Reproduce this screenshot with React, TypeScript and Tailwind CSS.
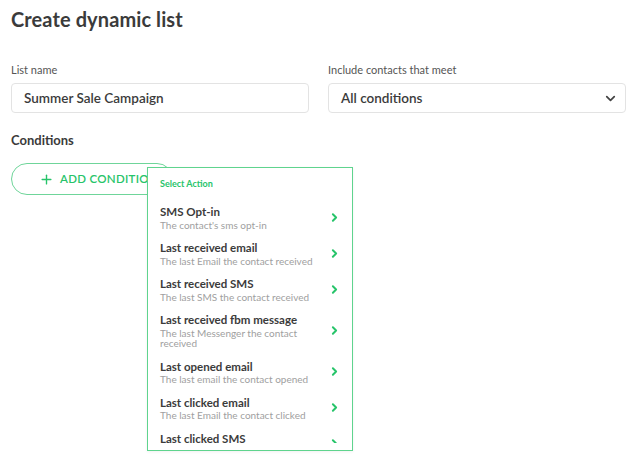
import { ChevronDown, ChevronRight, Plus } from 'lucide-react'

const actions = [
  { title: 'SMS Opt-in', desc: "The contact's sms opt-in" },
  { title: 'Last received email', desc: 'The last Email the contact received' },
  { title: 'Last received SMS', desc: 'The last SMS the contact received' },
  { title: 'Last received fbm message', desc: 'The last Messenger the contact received' },
  { title: 'Last opened email', desc: 'The last email the contact opened' },
  { title: 'Last clicked email', desc: 'The last Email the contact clicked' },
  { title: 'Last clicked SMS', desc: 'The last SMS the contact clicked' },
]

export default function App() {
  return (
    <main className="min-h-[467px] w-[638px] bg-white px-[11px] pt-[5px] font-['Lato','Liberation_Sans',sans-serif] text-[#3b3b3b]">
      <h1 className="text-[20px] font-bold leading-[28px] tracking-[0.1px]">
        Create dynamic list
      </h1>

      <div className="mt-[30px] flex gap-[19px]">
        <div className="w-[298px]">
          <label className="block text-[11px] leading-[14px] text-[#555]">List name</label>
          <div className="mt-[6px] flex h-[30px] items-center rounded-[4px] border border-[#e3e3e3] px-[12px] text-[13.5px] font-semibold">
            Summer Sale Campaign
          </div>
        </div>
        <div className="w-[298px]">
          <label className="block text-[11px] leading-[14px] text-[#555]">
            Include contacts that meet
          </label>
          <div className="mt-[6px] flex h-[30px] items-center justify-between rounded-[4px] border border-[#e3e3e3] pl-[12px] pr-[7px] text-[13.5px] font-semibold">
            All conditions
            <ChevronDown size={15} strokeWidth={2.8} className="text-[#444]" />
          </div>
        </div>
      </div>

      <h2 className="mt-[18px] text-[13px] font-bold leading-[18px]">Conditions</h2>

      <div className="relative mt-[14px]">
        <button className="flex h-[32px] w-[162px] items-center gap-[6px] rounded-full border border-[#6fd59a] pl-[27px] text-[11.5px] font-semibold tracking-[0.3px] text-[#27c46a]">
          <Plus size={15} strokeWidth={2.2} />
          ADD CONDITION
        </button>

        <div className="absolute left-[136px] top-[4px] h-[284px] w-[206px] border border-[#5fd48e] bg-white shadow-[0_1px_3px_rgba(0,0,0,0.06)]">
          <p className="px-[12px] pt-[10px] text-[9px] font-bold leading-[12px] text-[#27c46a]">
            Select Action
          </p>
          <div className="mt-[4px] h-[249px] overflow-hidden">
            <ul className="pt-[5.25px]">
              {actions.map((a) => (
                <li key={a.title} className="flex items-center justify-between py-[5px] pl-[12px] pr-[11px]">
                  <div className="w-[162px]">
                    <p className="text-[11.5px] font-bold leading-[15.5px] text-[#3b3b3b]">{a.title}</p>
                    <p className="text-[10px] leading-[10.5px] text-[#a0a0a0]">{a.desc}</p>
                  </div>
                  <ChevronRight size={13} strokeWidth={3.6} className="text-[#27c46a]" />
                </li>
              ))}
            </ul>
          </div>
        </div>
      </div>
    </main>
  )
}
